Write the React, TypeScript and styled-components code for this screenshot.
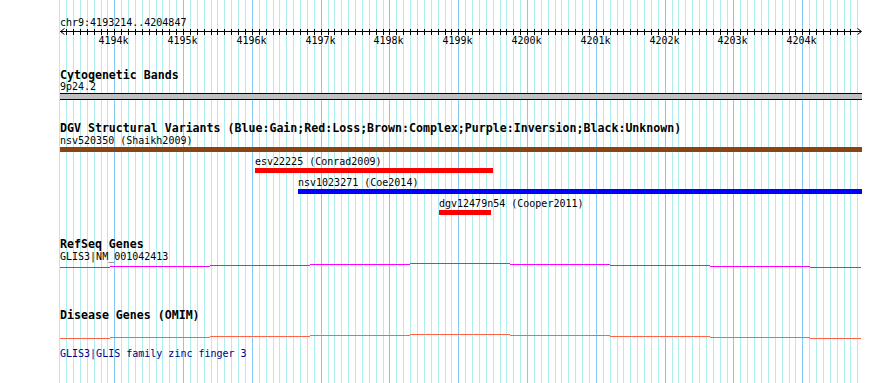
import React from 'react';
import styled, { createGlobalStyle } from 'styled-components';

interface Variant {
  name: string;
  study: string;
  start: number;
  end: number;
  color: string;
}

const VIEW_START = 4193214;
const VIEW_END = 4204847;
const LEFT = 60.2;
const PX_PER_BP = 0.0688;
const TRACK_RIGHT = 862;
const WIDTH = 890;
const HEIGHT = 383;

const toX = (pos: number) => LEFT + (pos - VIEW_START) * PX_PER_BP;

const dgvVariants: Variant[] = [
  { name: 'nsv520350', study: 'Shaikh2009', start: 4193214, end: 4205000, color: '#8b4513' },
  { name: 'esv22225', study: 'Conrad2009', start: 4196045, end: 4199505, color: '#ff0000' },
  { name: 'nsv1023271', study: 'Coe2014', start: 4196670, end: 4205000, color: '#0000ff' },
  { name: 'dgv12479n54', study: 'Cooper2011', start: 4198720, end: 4199476, color: '#ff0000' },
];

// every 100bp inside the view, used by the grid and the ruler ticks
const hundreds: number[] = [];
for (let p = Math.floor(VIEW_START / 100) * 100; p <= VIEW_END; p += 100) hundreds.push(p);

const GlobalStyle = createGlobalStyle`
  html, body {
    margin: 0;
    padding: 0;
    background: #ffffff;
  }
  body {
    font-family: "DejaVu Sans Mono", "Liberation Mono", monospace;
  }
`;

const Page = styled.div`
  position: relative;
  width: ${WIDTH}px;
  height: ${HEIGHT}px;
  overflow: hidden;
  background: #ffffff;
  color: #000000;
  font-family: "DejaVu Sans Mono", "Liberation Mono", monospace;
`;

const GridLayer = styled.svg`
  position: absolute;
  top: 0;
  left: 0;
  z-index: 0;
`;

const Panel = styled.div`
  position: relative;
  z-index: 1;
  padding-top: 16px;
`;

const ChromLabel = styled.div`
  margin-left: 60px;
  height: 13px;
  font-size: 10px;
  line-height: 13px;
  white-space: nowrap;
`;

const RulerSvg = styled.svg`
  display: block;
  overflow: visible;

  text {
    font-family: "DejaVu Sans Mono", "Liberation Mono", monospace;
    font-size: 10px;
    fill: #000000;
  }
`;

const Track = styled.section<{ $gap: number }>`
  margin-top: ${p => p.$gap}px;
  padding-left: 60px;
`;

const TrackTitle = styled.div`
  height: 12px;
  font-size: 11.6px;
  font-weight: bold;
  line-height: 12px;
  white-space: nowrap;
`;

const FeatureLabel = styled.div<{ $color?: string; $gap?: number }>`
  margin-top: ${p => p.$gap ?? 0}px;
  height: 11px;
  font-size: 10px;
  line-height: 11px;
  white-space: nowrap;
  color: ${p => p.$color ?? '#000000'};
`;

const Band = styled.div`
  margin-top: 1px;
  width: ${TRACK_RIGHT - 60}px;
  height: 5px;
  background: #c0c0c0;
  border-top: 1px solid #000000;
  border-bottom: 1px solid #000000;
`;

const Feature = styled.div<{ $gap: number }>`
  margin-top: ${p => p.$gap}px;
`;

const FeatureBar = styled.div<{ $color: string }>`
  margin-top: 1px;
  height: 5px;
  background: ${p => p.$color};
`;

const GeneSvg = styled.svg<{ $gap: number }>`
  display: block;
  margin-top: ${p => p.$gap}px;
`;

const Grid = () => (
  <GridLayer width={WIDTH} height={HEIGHT}>
    {hundreds.map(p => {
      const x = Math.round(toX(p));
      if (x < 59) return null;
      const major = p % 1000 === 0;
      return (
        <rect key={p} x={x} y={0} width={1} height={HEIGHT} fill={major ? '#87c8f2' : '#aeeeee'} />
      );
    })}
  </GridLayer>
);

const Ruler = () => {
  const right = Math.round(toX(VIEW_END));
  return (
    <RulerSvg width={WIDTH} height={24}>
      <line x1={60} y1={2.5} x2={right} y2={2.5} stroke="#000" strokeWidth={1} />
      <polyline points="64.5,-0.5 60.5,2.5 64.5,5.5" fill="none" stroke="#000" strokeWidth={1} />
      <polyline points={`${right - 3.5},-0.5 ${right + 0.5},2.5 ${right - 3.5},5.5`} fill="none" stroke="#000" strokeWidth={1} />
      {hundreds.map(p => {
        const x = Math.round(toX(p));
        if (x < 62 || x > right - 5) return null;
        return <rect key={p} x={x} y={0} width={1} height={6} fill="#000" />;
      })}
      {hundreds
        .filter(p => p % 1000 === 0 && toX(p) > 60)
        .map(p => (
          <text key={p} x={Math.round(toX(p)) - 0.5} y={15} textAnchor="middle">
            {p / 1000}k
          </text>
        ))}
    </RulerSvg>
  );
};

// intron "hat" drawn as 1px steps, like the original gd rendering
const GeneLine: React.FC<{ color: string; height: number; base: number; gap: number }> = ({ color, height, base, gap }) => {
  const breaks = [60, 110, 210, 310, 410, 510, 610, 710, 810, 861];
  const levels = [0, 1, 2, 3, 4, 3, 2, 1, 0];
  return (
    <GeneSvg $gap={gap} width={WIDTH - 60} height={height} viewBox={`60 0 ${WIDTH - 60} ${height}`}>
      {levels.map((lv, i) => (
        <rect key={i} x={breaks[i]} y={base - lv} width={breaks[i + 1] - breaks[i]} height={1} fill={color} />
      ))}
    </GeneSvg>
  );
};

const App: React.FC = () => (
  <Page>
    <GlobalStyle />
    <Grid />
    <Panel>
      <ChromLabel>chr9:4193214..4204847</ChromLabel>
      <Ruler />

      <Track $gap={16}>
        <TrackTitle>Cytogenetic Bands</TrackTitle>
        <FeatureLabel>9p24.2</FeatureLabel>
        <Band />
      </Track>

      <Track $gap={22}>
        <TrackTitle>DGV Structural Variants (Blue:Gain;Red:Loss;Brown:Complex;Purple:Inversion;Black:Unknown)</TrackTitle>
        {dgvVariants.map((v, i) => {
          const x0 = Math.max(60, Math.round(toX(v.start)));
          const x1 = Math.min(TRACK_RIGHT, Math.round(toX(v.end)));
          return (
            <Feature key={v.name} $gap={i === 0 ? 1 : 4} style={{ marginLeft: x0 - 60, width: x1 - x0 }}>
              <FeatureLabel>{v.name} ({v.study})</FeatureLabel>
              <FeatureBar $color={v.color} />
            </Feature>
          );
        })}
      </Track>

      <Track $gap={23}>
        <TrackTitle>RefSeq Genes</TrackTitle>
        <FeatureLabel $gap={1}>GLIS3|NM_001042413</FeatureLabel>
        <GeneLine color="#ff00ff" height={8} base={5} gap={0} />
      </Track>

      <Track $gap={39}>
        <TrackTitle>Disease Genes (OMIM)</TrackTitle>
        <GeneLine color="#ff6347" height={10} base={8} gap={9} />
        <FeatureLabel $gap={8} $color="#00008b">GLIS3|GLIS family zinc finger 3</FeatureLabel>
      </Track>
    </Panel>
  </Page>
);

export default App;
